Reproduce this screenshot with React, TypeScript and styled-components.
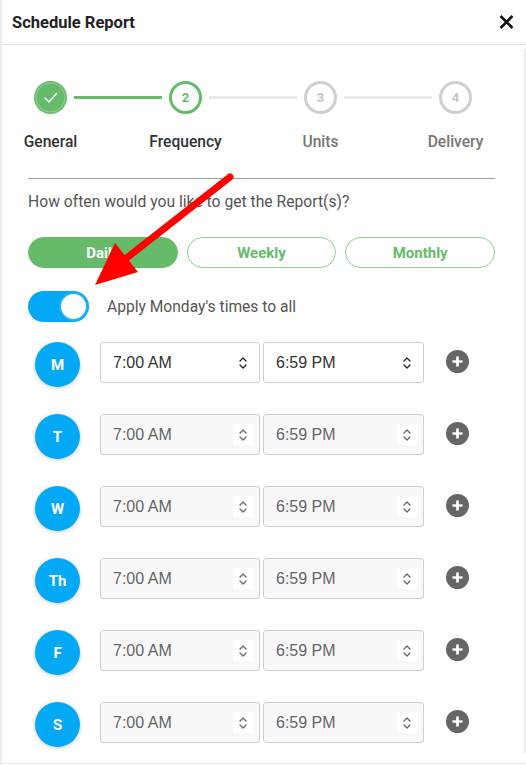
import React from "react";
import styled, { createGlobalStyle } from "styled-components";

const Global = createGlobalStyle`
  html, body { margin: 0; padding: 0; background: #fff; }
  body { font-family: Roboto, "Noto Sans", Arial, sans-serif; }
  * { box-sizing: border-box; }
`;

const Page = styled.div`
  position: relative;
  width: 526px;
  height: 765px;
  overflow: hidden;
  border-left: 2px solid #ececec;
  display: flex;
  flex-direction: column;
  background: #fff;
`;

const Header = styled.header`
  flex: 0 0 45px;
  border-bottom: 1px solid #e3e3e3;
  display: flex;
  align-items: center;
  justify-content: space-between;
  padding: 0 12px 0 10px;
`;

const Title = styled.h1`
  margin: 0;
  font-size: 16.5px;
  font-weight: 700;
  color: #222;
`;

const CloseButton = styled.button`
  border: 0;
  background: none;
  padding: 0;
  width: 15px;
  height: 15px;
  display: flex;
  align-items: center;
  justify-content: center;
  cursor: pointer;
`;

const Body = styled.div`
  flex: 0 0 708px;
  display: flex;
`;

const Content = styled.main`
  flex: 1;
  padding: 36px 29px 0 26px;
  display: flex;
  flex-direction: column;
  overflow: hidden;
`;

const ScrollTrack = styled.div`
  flex: 0 0 2px;
  margin-top: 4px;
  background: #ededed;
`;

const Footer = styled.div`
  flex: 0 0 11px;
  border-bottom: 1px solid #ececec;
`;

/* Stepper */
const Steps = styled.div`
  display: flex;
  align-items: flex-start;
  padding: 0 23px 0 6px;
`;

const Step = styled.div`
  flex: 0 0 33px;
  min-width: 0;
  display: flex;
  flex-direction: column;
  align-items: center;
`;

const StepCircle = styled.div<{ $state: "done" | "active" | "todo" }>`
  flex: 0 0 33px;
  width: 33px;
  height: 33px;
  border-radius: 50%;
  display: flex;
  align-items: center;
  justify-content: center;
  font-size: 13px;
  font-weight: 700;
  background: ${(p) => (p.$state === "done" ? "#66bb6a" : "#fff")};
  border: ${(p) =>
    p.$state === "done"
      ? "none"
      : p.$state === "active"
      ? "3px solid #66bb6a"
      : "3px solid #cfcfcf"};
  color: ${(p) => (p.$state === "active" ? "#66bb6a" : "#c4c4c4")};
`;

const StepLabel = styled.div<{ $muted?: boolean }>`
  margin-top: 18px;
  line-height: 20px;
  font-size: 15.6px;
  font-weight: 500;
  white-space: nowrap;
  color: ${(p) => (p.$muted ? "#777" : "#333")};
`;

const Connector = styled.div<{ $done?: boolean }>`
  flex: 1;
  height: 3px;
  margin: 15px 7px 0;
  background: ${(p) => (p.$done ? "#66bb6a" : "#e8e8ec")};
`;

const Divider = styled.hr`
  margin: 26px 0 0;
  border: 0;
  height: 1px;
  background: #9e9e9e;
`;

const Question = styled.p`
  margin: 13px 0 0;
  line-height: 20px;
  font-size: 15.7px;
  color: #555;
`;

const Choices = styled.div`
  margin-top: 25px;
  display: grid;
  grid-template-columns: 1fr 1fr 1fr;
  gap: 9px;
`;

const Choice = styled.button<{ $selected?: boolean }>`
  height: 31px;
  border-radius: 16px;
  font-family: Roboto, sans-serif;
  font-size: 15px;
  font-weight: 700;
  cursor: pointer;
  border: 1px solid ${(p) => (p.$selected ? "#66bb6a" : "#8fcf92")};
  background: ${(p) => (p.$selected ? "#66bb6a" : "#fff")};
  color: ${(p) => (p.$selected ? "#fff" : "#66bb6a")};
`;

const ToggleRow = styled.label`
  margin-top: 23px;
  display: flex;
  align-items: center;
  gap: 18px;
  font-size: 15.6px;
  color: #555;
  height: 31px;
`;

const Toggle = styled.span`
  position: relative;
  width: 61px;
  height: 31px;
  border-radius: 16px;
  background: #03a9f4;
  flex: 0 0 auto;
`;

const Knob = styled.span`
  position: absolute;
  right: 1px;
  top: 1px;
  width: 29px;
  height: 29px;
  border-radius: 50%;
  background: #fff;
  border: 2px solid #1fb1f5;
`;

const Days = styled.div`
  margin-top: 20px;
  display: flex;
  flex-direction: column;
  gap: 27px;
`;

const DayRow = styled.div`
  display: flex;
  align-items: flex-start;
  padding-left: 7px;
`;

const DayBadge = styled.div`
  flex: 0 0 45px;
  height: 45px;
  border-radius: 50%;
  background: #03a9f4;
  color: #fff;
  font-size: 15px;
  font-weight: 700;
  display: flex;
  align-items: center;
  justify-content: center;
  box-shadow: 0 1px 4px rgba(0, 0, 0, 0.22);
  margin-right: 20px;
`;

const Times = styled.div`
  display: flex;
  gap: 3px;
`;

const TimeField = styled.div<{ $disabled?: boolean; $w: number }>`
  width: ${(p) => p.$w}px;
  height: 41px;
  border: 1px solid #cfcfcf;
  border-radius: 3px;
  background: ${(p) => (p.$disabled ? "#f8f8f8" : "#fff")};
  display: flex;
  align-items: center;
  justify-content: space-between;
  padding: 0 6px 0 12px;
  font-family: "Liberation Sans", Arial, sans-serif;
  font-size: 16px;
  color: ${(p) => (p.$disabled ? "#666" : "#333")};
`;

const Spinner = styled.span<{ $disabled?: boolean }>`
  width: 20px;
  height: 21px;
  display: flex;
  align-items: center;
  justify-content: center;
  background: #fff;
  color: ${(p) => (p.$disabled ? "#666" : "#222")};
`;

const AddButton = styled.button`
  margin: 8px 0 0 22px;
  border: 0;
  padding: 0;
  width: 23px;
  height: 23px;
  border-radius: 50%;
  background: #666;
  display: flex;
  align-items: center;
  justify-content: center;
  cursor: pointer;
`;

const ArrowOverlay = styled.svg`
  position: absolute;
  left: 0;
  top: 0;
  pointer-events: none;
`;

const SpinIcon = () => (
  <svg width="8" height="14" viewBox="0 0 8 14" fill="none">
    <path d="M1 5 L4 2 L7 5" stroke="currentColor" strokeWidth="1.3" strokeLinecap="round" strokeLinejoin="round" />
    <path d="M1 9 L4 12 L7 9" stroke="currentColor" strokeWidth="1.3" strokeLinecap="round" strokeLinejoin="round" />
  </svg>
);

const days = ["M", "T", "W", "Th", "F", "S"];

export default function App() {
  return (
    <>
      <Global />
      <Page>
        <Header>
          <Title>Schedule Report</Title>
          <CloseButton aria-label="Close">
            <svg width="15" height="14" viewBox="0 0 15 14">
              <path d="M1.5 1 L13.5 13 M13.5 1 L1.5 13" stroke="#111" strokeWidth="2.6" />
            </svg>
          </CloseButton>
        </Header>
        <Body>
          <Content>
            <Steps>
              <Step>
                <StepCircle $state="done">
                  <svg width="33" height="33" viewBox="0 0 33 33">
                    <circle cx="16.5" cy="16.5" r="14.5" fill="none" stroke="rgba(255,255,255,0.3)" strokeWidth="1" />
                    <path d="M11 17 L15 21 L22.5 12.5" fill="none" stroke="#fff" strokeWidth="1.4" strokeLinecap="round" strokeLinejoin="round" />
                  </svg>
                </StepCircle>
                <StepLabel>General</StepLabel>
              </Step>
              <Connector $done />
              <Step>
                <StepCircle $state="active">2</StepCircle>
                <StepLabel>Frequency</StepLabel>
              </Step>
              <Connector />
              <Step>
                <StepCircle $state="todo">3</StepCircle>
                <StepLabel $muted>Units</StepLabel>
              </Step>
              <Connector />
              <Step>
                <StepCircle $state="todo">4</StepCircle>
                <StepLabel $muted>Delivery</StepLabel>
              </Step>
            </Steps>
            <Divider />
            <Question>How often would you like to get the Report(s)?</Question>
            <Choices>
              <Choice $selected>Daily</Choice>
              <Choice>Weekly</Choice>
              <Choice>Monthly</Choice>
            </Choices>
            <ToggleRow>
              <Toggle>
                <Knob />
              </Toggle>
              Apply Monday's times to all
            </ToggleRow>
            <Days>
              {days.map((d, i) => (
                <DayRow key={d}>
                  <DayBadge>{d}</DayBadge>
                  <Times>
                    <TimeField $w={160} $disabled={i > 0}>
                      7:00 AM
                      <Spinner $disabled={i > 0}>
                        <SpinIcon />
                      </Spinner>
                    </TimeField>
                    <TimeField $w={161} $disabled={i > 0}>
                      6:59 PM
                      <Spinner $disabled={i > 0}>
                        <SpinIcon />
                      </Spinner>
                    </TimeField>
                  </Times>
                  <AddButton aria-label="Add time">
                    <svg width="13" height="13" viewBox="0 0 13 13">
                      <path d="M6.5 1.5 V11.5 M1.5 6.5 H11.5" stroke="#fff" strokeWidth="2.6" />
                    </svg>
                  </AddButton>
                </DayRow>
              ))}
            </Days>
          </Content>
          <ScrollTrack />
        </Body>
        <Footer />
        <ArrowOverlay width="526" height="765" viewBox="0 0 526 765">
          <line x1="228" y1="177" x2="122" y2="260" stroke="#ff0000" strokeWidth="7" strokeLinecap="round" />
          <polygon points="93,285 113,243 136,272" fill="#ff0000" />
        </ArrowOverlay>
      </Page>
    </>
  );
}
